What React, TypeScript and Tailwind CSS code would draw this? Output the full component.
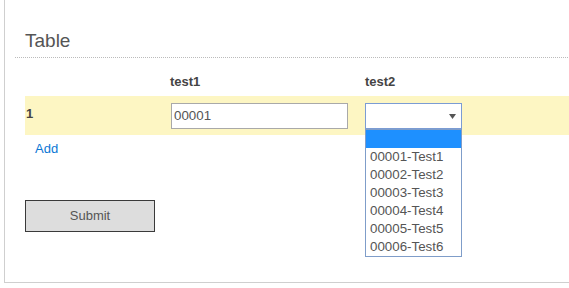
import { useState } from "react";

const options = [
   "00001-Test1",
   "00002-Test2",
   "00003-Test3",
   "00004-Test4",
   "00005-Test5",
   "00006-Test6",
];

export default function App() {
   const [value, setValue] = useState("00001");

   return (
      <div className="w-[569px] h-[288px] overflow-hidden bg-white font-['Liberation_Sans',Arial,sans-serif] text-[13px] text-[#555]">
         <div className="ml-1 w-[600px] h-[283px] border-l border-b border-[#cfcfcf]">
            <div className="ml-[10px]">
               <h2 className="pl-[10px] pt-[29px] pb-[4px] text-[19px] leading-[24px] text-[#555] border-b border-dotted border-[#bbb]">
                  Table
               </h2>

               <div className="pl-[10px]">
                  {/* header */}
                  <div className="grid grid-cols-[145px_195px_1fr] h-[38px] pt-[16px] font-bold text-[#444] leading-[16px]">
                     <div></div>
                     <div>test1</div>
                     <div>test2</div>
                  </div>

                  {/* row */}
                  <div className="grid grid-cols-[145px_195px_1fr] items-center h-[39px] bg-[#fdf6c3]">
                     <div className="font-bold text-[#444] pl-[1px] -mt-[3px]">1</div>
                     <div className="pl-[1px]">
                        <input
                           value={value}
                           onChange={(e) => setValue(e.target.value)}
                           className="block w-[177px] h-[26px] px-[2px] border border-[#a9a9a9] bg-white text-[13.33px] text-[#555] outline-none"
                        />
                     </div>
                     <div className="relative">
                        <div className="flex items-center justify-end w-[97px] h-[26px] pr-[5px] border border-[#7b9cd4] bg-white">
                           <svg width="7" height="5" viewBox="0 0 7 5" className="mt-[1px]">
                              <path d="M0 0H7L3.5 5Z" fill="#555" />
                           </svg>
                        </div>
                        <ul className="absolute left-0 top-[26px] z-10 w-[97px] border border-[#7f9dc9] bg-white text-[13.33px] text-[#555]">
                           <li className="h-[18px] bg-[#1e90ff]"></li>
                           {options.map((o) => (
                              <li key={o} className="h-[18px] leading-[18px] pl-[4px]">
                                 {o}
                              </li>
                           ))}
                        </ul>
                     </div>
                  </div>

                  <a href="#" className="block mt-[6px] ml-[10px] w-fit leading-[16px] text-[#0a77d5]">
                     Add
                  </a>

                  <button
                     type="button"
                     className="block mt-[43px] w-[130px] h-[32px] bg-[#dddddd] border border-[#3a3a3a] text-[13px] text-[#555]"
                  >
                     Submit
                  </button>
               </div>
            </div>
         </div>
      </div>
   );
}
